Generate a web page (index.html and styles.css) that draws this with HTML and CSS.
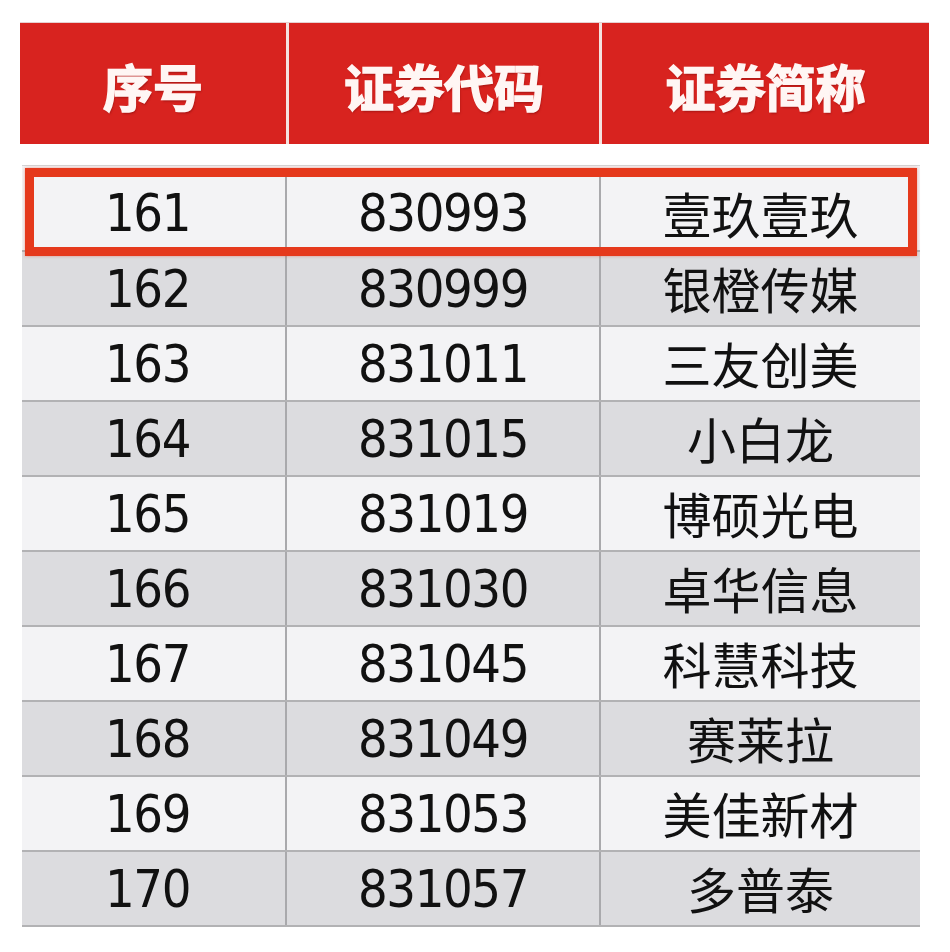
FILE: index.html
```html
<!DOCTYPE html>
<html lang="zh-CN">
<head>
<meta charset="utf-8">
<title>证券列表</title>
<link rel="stylesheet" href="styles.css">
</head>
<body>
<div class="page">
  <div class="head">
    <div class="hcell">序号</div>
    <div class="hcell">证券代码</div>
    <div class="hcell">证券简称</div>
  </div>
  <div class="body">
    <div class="row first light"><div class="cell c1 num">161</div><div class="cell num">830993</div><div class="cell zh">壹玖壹玖</div></div>
    <div class="row dark"><div class="cell c1 num">162</div><div class="cell num">830999</div><div class="cell zh">银橙传媒</div></div>
    <div class="row light"><div class="cell c1 num">163</div><div class="cell num">831011</div><div class="cell zh">三友创美</div></div>
    <div class="row dark"><div class="cell c1 num">164</div><div class="cell num">831015</div><div class="cell zh">小白龙</div></div>
    <div class="row light"><div class="cell c1 num">165</div><div class="cell num">831019</div><div class="cell zh">博硕光电</div></div>
    <div class="row dark"><div class="cell c1 num">166</div><div class="cell num">831030</div><div class="cell zh">卓华信息</div></div>
    <div class="row light"><div class="cell c1 num">167</div><div class="cell num">831045</div><div class="cell zh">科慧科技</div></div>
    <div class="row dark"><div class="cell c1 num">168</div><div class="cell num">831049</div><div class="cell zh">赛莱拉</div></div>
    <div class="row light"><div class="cell c1 num">169</div><div class="cell num">831053</div><div class="cell zh">美佳新材</div></div>
    <div class="row dark"><div class="cell c1 num">170</div><div class="cell num">831057</div><div class="cell zh">多普泰</div></div>
    <div class="highlight"></div>
  </div>
</div>
</body>
</html>
```

FILE: styles.css
```css
html, body {
  margin: 0;
  padding: 0;
  background: #ffffff;
}

.page {
  padding: 23px 0 0 20px;
  font-family: "Noto Sans CJK SC", "Noto Sans", sans-serif;
}

.head {
  display: grid;
  grid-template-columns: 266px 313px 330px;
  width: 909px;
  height: 121px;
  background: #d8231f;
  box-shadow: 0 -1px 0 #e6d0d0;
}

.hcell {
  display: flex;
  align-items: center;
  justify-content: center;
  color: #fff6f4;
  font-size: 50px;
  font-weight: 700;
  -webkit-text-stroke: 1.5px #fff6f4;
  text-shadow: 1px 2px 2px rgba(90, 0, 0, 0.35);
  letter-spacing: 0;
  padding-top: 2px;
}

.hcell + .hcell {
  border-left: 3px solid #f4e3e0;
}

.body {
  position: relative;
  margin: 21px 0 0 2px;
  width: 898px;
  border-top: 1px solid #d4d4d6;
}

.row {
  display: grid;
  grid-template-columns: 263px 314px 321px;
  height: 75px;
  box-sizing: border-box;
  border-bottom: 2px solid #b2b2b4;
}

.row.first {
  height: 86px;
  padding-top: 10px;
}

.light {
  background: #f3f3f5;
}

.dark {
  background: #dcdcdf;
}

.cell {
  display: flex;
  align-items: center;
  justify-content: center;
  color: #111111;
}

.cell + .cell {
  border-left: 2px solid #a9a9ac;
}

.c1 {
  padding-right: 12px;
}

.num {
  font-family: "DejaVu Sans Condensed", "DejaVu Sans", sans-serif;
  font-stretch: semi-condensed;
  font-size: 52px;
  letter-spacing: -1.4px;
}

.zh {
  font-family: "Noto Sans CJK SC", sans-serif;
  font-size: 49px;
  padding-bottom: 2px;
}

.highlight {
  position: absolute;
  left: 3px;
  right: 3px;
  top: 2px;
  height: 88px;
  box-sizing: border-box;
  border: 9px solid #e5391c;
  box-shadow: 0 0 3px rgba(229, 57, 28, 0.45);
}
```
